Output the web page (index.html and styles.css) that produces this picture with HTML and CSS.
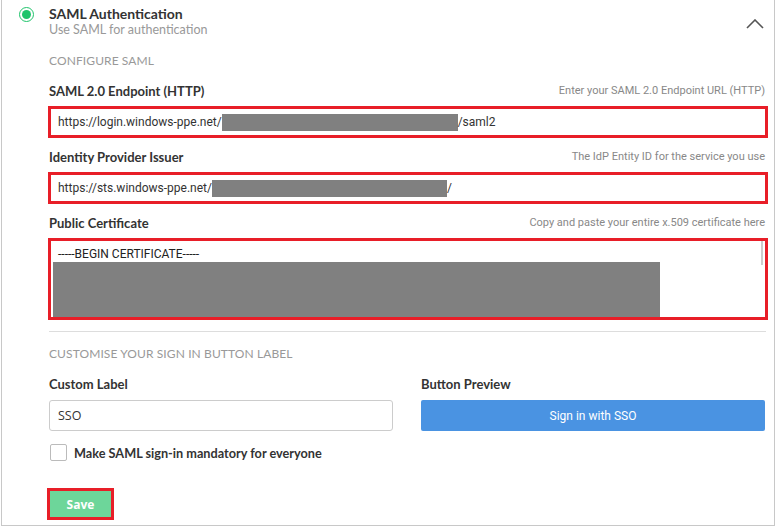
FILE: index.html
```html
<!DOCTYPE html>
<html>
<head>
<meta charset="utf-8">
<link rel="stylesheet" href="styles.css">
</head>
<body>
<div class="panel">
  <div class="header">
    <span class="radio"><span class="radio-dot"></span></span>
    <div class="title-block">
      <div class="title">SAML Authentication</div>
      <div class="subtitle">Use SAML for authentication</div>
    </div>
    <svg class="chevron" width="18" height="10" viewBox="0 0 18 10"><path d="M1 9 L9 1 L17 9" fill="none" stroke="#555" stroke-width="1.6"/></svg>
  </div>
  <div class="body">
    <div class="section-title">CONFIGURE SAML</div>

    <div class="field-head"><span class="label">SAML 2.0 Endpoint (HTTP)</span><span class="hint">Enter your SAML 2.0 Endpoint URL (HTTP)</span></div>
    <div class="box hl">https://login.windows-ppe.net/<span class="redact" style="width:236px"></span>/saml2</div>

    <div class="field-head"><span class="label">Identity Provider Issuer</span><span class="hint">The IdP Entity ID for the service you use</span></div>
    <div class="box hl">https://sts.windows-ppe.net/<span class="redact" style="width:235px"></span>/</div>

    <div class="field-head"><span class="label">Public Certificate</span><span class="hint">Copy and paste your entire x.509 certificate here</span></div>
    <div class="textarea hl">
      <div class="cert-line">-----BEGIN CERTIFICATE-----</div>
      <div class="cert-redact"></div>
      <span class="scrollbar"></span>
    </div>

    <div class="separator"></div>

    <div class="section-title second">CUSTOMISE YOUR SIGN IN BUTTON LABEL</div>

    <div class="two-col">
      <div class="col">
        <div class="label col-label">Custom Label</div>
        <div class="plain-input">SSO</div>
      </div>
      <div class="col">
        <div class="label col-label">Button Preview</div>
        <div class="preview-btn">Sign in with SSO</div>
      </div>
    </div>

    <div class="check-row">
      <span class="checkbox"></span>
      <span class="check-label">Make SAML sign-in mandatory for everyone</span>
    </div>

    <div class="save-wrap"><span class="save-btn">Save</span></div>
  </div>
</div>
</body>
</html>
```
FILE: styles.css
```css
html, body {
  margin: 0;
  padding: 0;
  background: #fff;
}
body {
  font-family: "Lato", "Open Sans", "Liberation Sans", sans-serif;
  color: #333;
}
.panel {
  margin-left: 1px;
  width: 774px;
  height: 526px;
  box-sizing: border-box;
  border: 1px solid #c8c8c8;
  border-top: none;
  position: relative;
}
.header {
  display: flex;
  align-items: flex-start;
  padding-top: 6px;
  padding-left: 17px;
  position: relative;
}
.radio {
  width: 15px;
  height: 15px;
  box-sizing: border-box;
  border: 1.5px solid #1fc46b;
  border-radius: 50%;
  display: flex;
  align-items: center;
  justify-content: center;
  margin-top: 1px;
}
.radio-dot {
  width: 9px;
  height: 9px;
  border-radius: 50%;
  background: #1fc46b;
}
.title-block {
  margin-left: 15px;
}
.title {
  font-size: 14px;
  line-height: 16px;
  font-weight: 700;
  color: #333;
}
.subtitle {
  font-size: 12.5px;
  line-height: 16px;
  color: #999;
}
.chevron {
  position: absolute;
  right: 10px;
  top: 19px;
}
.body {
  padding: 0 8px 0 47px;
}
.section-title {
  margin-top: 15px;
  font-size: 12px;
  line-height: 16px;
  color: #999;
  letter-spacing: 0.1px;
}
.section-title.second {
  margin-top: 14px;
}
.field-head {
  display: flex;
  justify-content: space-between;
  align-items: center;
  height: 16px;
  margin-top: 14px;
}
.field-head + .box, .field-head + .textarea {
  margin-top: 7px;
}
.box + .field-head {
  margin-top: 11px;
}
.label {
  font-size: 13px;
  font-weight: 700;
  line-height: 16px;
  color: #333;
}
.hint {
  font-family: "Roboto", "Liberation Sans", sans-serif;
  font-size: 11px;
  line-height: 16px;
  color: #888;
  margin-right: 1px;
}
.hl {
  border: 3px solid #e81e28;
  margin-left: -1px;
  margin-right: -2px;
  box-sizing: border-box;
}
.box {
  height: 32px;
  display: flex;
  align-items: center;
  padding-left: 7px;
  font-family: "Roboto", "Liberation Sans", sans-serif;
  font-size: 12px;
  color: #333;
}
.redact {
  display: inline-block;
  height: 17px;
  background: #808080;
}
.textarea {
  height: 82px;
  position: relative;
  padding: 5px 0 0 2px;
  overflow: hidden;
}
.cert-line {
  font-family: "Roboto", "Liberation Sans", sans-serif;
  font-size: 12px;
  line-height: 16px;
  color: #222;
  padding-left: 5px;
}
.cert-redact {
  width: 607px;
  height: 60px;
  background: #808080;
}
.scrollbar {
  position: absolute;
  right: 2px;
  top: 0;
  width: 2px;
  height: 24px;
  background: #ccc;
}
.separator {
  margin-top: 11px;
  height: 1px;
  background: #ddd;
}
.two-col {
  display: grid;
  grid-template-columns: 344px 344px;
  column-gap: 28px;
  margin-top: 14px;
}
.col-label {
  line-height: 16px;
}
.plain-input {
  margin-top: 8px;
  height: 31px;
  box-sizing: border-box;
  border: 1px solid #ccc;
  border-radius: 3px;
  padding-left: 8px;
  display: flex;
  align-items: center;
  font-family: "Open Sans", "Liberation Sans", sans-serif;
  font-size: 12.5px;
  color: #333;
}
.preview-btn {
  margin-top: 8px;
  height: 31px;
  border-radius: 2px;
  background: #4a93e2;
  color: #fff;
  display: flex;
  align-items: center;
  justify-content: center;
  font-family: "Roboto", "Liberation Sans", sans-serif;
  font-size: 12px;
}
.check-row {
  display: flex;
  align-items: center;
  height: 17px;
  margin-top: 13px;
  margin-left: 1px;
}
.checkbox {
  width: 17px;
  height: 17px;
  box-sizing: border-box;
  border: 1px solid #bbb;
  border-radius: 2px;
}
.check-label {
  margin-left: 7px;
  font-size: 12.7px;
  font-weight: 700;
  color: #333;
}
.save-wrap {
  margin-top: 27px;
  margin-left: -2px;
  display: flex;
}
.save-btn {
  display: inline-flex;
  align-items: center;
  justify-content: center;
  width: 67px;
  height: 32px;
  box-sizing: border-box;
  border: 3px solid #e81e28;
  background: #6dd69a;
  color: #fff;
  font-family: "Open Sans", "Liberation Sans", sans-serif;
  font-size: 12px;
  font-weight: 700;
}
```
